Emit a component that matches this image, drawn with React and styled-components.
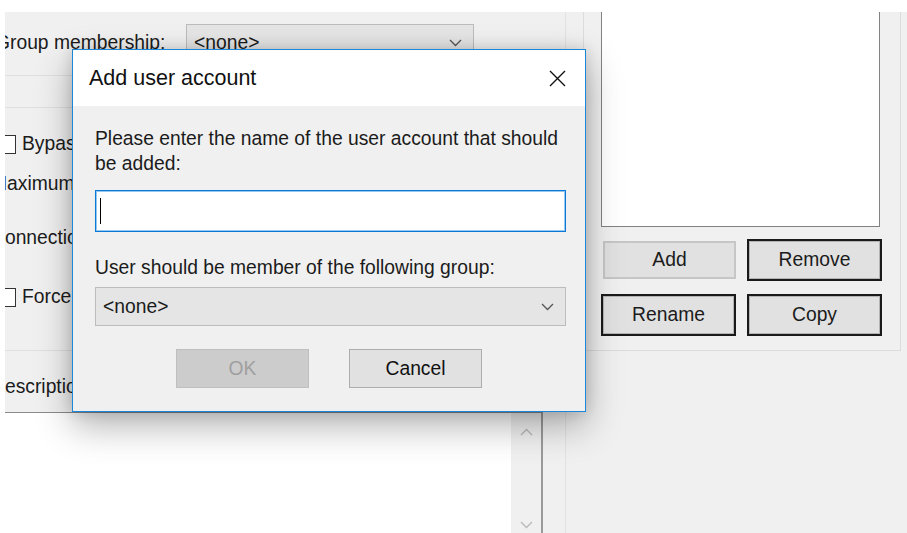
import React from "react";
import styled, { createGlobalStyle } from "styled-components";

const GlobalStyle = createGlobalStyle`
  * { box-sizing: border-box; }
  html, body { margin: 0; padding: 0; background: #ffffff; }
  body {
    font-family: "Liberation Sans", Arial, sans-serif;
    font-size: 19.3px;
    color: #1b1b1b;
  }
`;

const Screen = styled.div`
  position: relative;
  width: 907px;
  height: 533px;
  padding: 12px 0 0 5px;
  overflow: hidden;
`;

const Window = styled.div`
  display: flex;
  height: 521px;
  background: #f0f0f0;
  overflow: hidden;
`;

/* ---------- left settings pane ---------- */

const LeftPane = styled.div`
  width: 561px;
  flex-shrink: 0;
  display: flex;
  flex-direction: column;
  padding-right: 22px;
  border-right: 1px solid #e2e2e2;
`;

const GroupRow = styled.div`
  display: flex;
  align-items: center;
  height: 63px;
  padding-top: 12px;
  padding-bottom: 14px;
`;

const Label = styled.span`
  display: block;
  margin-left: ${({ $ml }) => ($ml !== undefined ? $ml : -14)}px;
  line-height: 25px;
  white-space: nowrap;
  width: ${({ $w }) => ($w ? `${$w}px` : "auto")};
  flex-shrink: 0;
`;

const Divider = styled.div`
  height: 1px;
  margin-top: ${({ $mt }) => $mt || 0}px;
  background: #dfdfdf;
  flex-shrink: 0;
`;

const BlankRow = styled.div`
  height: 31px;
`;

const Field = styled.div`
  display: flex;
  align-items: center;
  height: 30px;
  margin-top: ${({ $mt }) => $mt}px;
`;

const Check = styled.span`
  width: 19px;
  height: 19px;
  margin-left: -8px;
  margin-right: 6px;
  border: 1px solid #333;
  background: #fff;
  flex-shrink: 0;
`;

const Combo = styled.div`
  display: flex;
  align-items: center;
  justify-content: space-between;
  width: ${({ $w }) => ($w ? `${$w}px` : "100%")};
  height: ${({ $h }) => $h}px;
  padding: 0 11px 0 7px;
  background: #e5e5e5;
  border: 1px solid #bcbcbc;
  color: #1b1b1b;
`;

const TextArea = styled.div`
  flex: 1;
  display: flex;
  justify-content: flex-end;
  margin-top: 11px;
  margin-left: -10px;
  background: #ffffff;
  border-top: 1px solid #8a8a8a;
  border-right: 2px solid #9a9a9a;
`;

const ScrollTrack = styled.div`
  width: 30px;
  display: flex;
  flex-direction: column;
  align-items: center;
  justify-content: space-between;
  padding: 15px 0 4px;
  background: #f0f0f0;
`;

/* ---------- right list pane ---------- */

const RightPane = styled.div`
  flex: 1;
  padding-left: 17px;
`;

const GroupBox = styled.div`
  width: 318px;
  margin-top: -2px;
  padding: 0 17px 14px;
  border: 1px solid #dcdcdc;
  border-top: none;
`;

const ListBox = styled.div`
  width: 279px;
  height: 217px;
  background: #ffffff;
  border: 1px solid #828282;
`;

const ButtonGrid = styled.div`
  display: grid;
  grid-template-columns: 135px 135px;
  grid-auto-rows: 42px;
  column-gap: 11px;
  row-gap: 13px;
  margin-top: 12px;
`;

const PaneButton = styled.div`
  display: flex;
  align-items: center;
  justify-content: center;
  background: #e1e1e1;
  color: #1b1b1b;
  border: ${({ $active }) => ($active ? "2px solid #1a1a1a" : "2px solid #c6c6c6")};
  box-shadow: ${({ $active }) => ($active ? "inset 0 0 0 1px #b4b4b4" : "none")};
  margin: ${({ $active }) => ($active ? "0" : "2px 0 2px 2px")};
`;

/* ---------- modal dialog ---------- */

const Dialog = styled.div`
  position: absolute;
  left: 72px;
  top: 49px;
  width: 514px;
  border: 1px solid #1c86d9;
  background: #f0f0f0;
  box-shadow: 0 14px 34px rgba(0, 0, 0, 0.3), 0 0 14px rgba(0, 0, 0, 0.14);
`;

const TitleBar = styled.div`
  display: flex;
  align-items: center;
  justify-content: space-between;
  height: 56px;
  padding: 0 19px 0 16px;
  background: #ffffff;
`;

const Title = styled.span`
  font-size: 21.5px;
  color: #111;
`;

const DialogBody = styled.div`
  display: flex;
  flex-direction: column;
  padding: 20px 19px 23px 22px;
`;

const Prompt = styled.p`
  margin: 0;
  line-height: 25px;
  margin-top: ${({ $mt }) => $mt || 0}px;
`;

const NameInput = styled.div`
  display: flex;
  align-items: center;
  height: 42px;
  margin-top: 14px;
  padding-left: 4px;
  background: #ffffff;
  border: 1px solid #0a78d6;
  box-shadow: inset 0 0 0 1px rgba(20, 130, 220, 0.45);
`;

const Caret = styled.span`
  width: 1px;
  height: 26px;
  background: #000;
`;

const ComboSlot = styled.div`
  margin-top: 7px;
`;

const ButtonRow = styled.div`
  display: flex;
  justify-content: center;
  gap: 40px;
  margin: 23px -19px 0 -22px;
`;

const DialogButton = styled.div`
  width: 133px;
  height: 39px;
  display: flex;
  align-items: center;
  justify-content: center;
  background: ${({ disabled }) => (disabled ? "#cccccc" : "#e1e1e1")};
  border: 1px solid ${({ disabled }) => (disabled ? "#bfbfbf" : "#adadad")};
  color: ${({ disabled }) => (disabled ? "#a0a0a0" : "#111")};
`;

const Chevron = ({ up, color = "#555" }) => (
  <svg width="13" height="8" viewBox="0 0 13 8">
    <polyline
      points={up ? "1,7 6.5,1.5 12,7" : "1,1 6.5,6.5 12,1"}
      fill="none"
      stroke={color}
      strokeWidth="1.3"
    />
  </svg>
);

const CloseIcon = () => (
  <svg width="17" height="17" viewBox="0 0 17 17">
    <path d="M1 1 L16 16 M16 1 L1 16" stroke="#111" strokeWidth="1.4" fill="none" />
  </svg>
);

export default function App() {
  return (
    <>
      <GlobalStyle />
      <Screen>
        <Window>
          <LeftPane>
            <GroupRow>
              <Label $ml={-10} $w={191}>Group membership:</Label>
              <Combo $w={288} $h={37}>
                &lt;none&gt;
                <Chevron />
              </Combo>
            </GroupRow>
            <Divider />
            <BlankRow />
            <Divider />
            <Field $mt={21}>
              <Check />
              <span>Bypass user limit</span>
            </Field>
            <Field $mt={9}>
              <Label>Maximum connection count:</Label>
            </Field>
            <Field $mt={24}>
              <Label>Connection limit:</Label>
            </Field>
            <Field $mt={30}>
              <Check />
              <span>Force SSL for user login</span>
            </Field>
            <Divider $mt={38} />
            <Field $mt={20}>
              <Label>Description</Label>
            </Field>
            <TextArea>
              <ScrollTrack>
                <Chevron up color="#b8b8b8" />
                <Chevron color="#b8b8b8" />
              </ScrollTrack>
            </TextArea>
          </LeftPane>

          <RightPane>
            <GroupBox>
              <ListBox />
              <ButtonGrid>
                <PaneButton>Add</PaneButton>
                <PaneButton $active>Remove</PaneButton>
                <PaneButton $active>Rename</PaneButton>
                <PaneButton $active>Copy</PaneButton>
              </ButtonGrid>
            </GroupBox>
          </RightPane>
        </Window>

        <Dialog>
          <TitleBar>
            <Title>Add user account</Title>
            <CloseIcon />
          </TitleBar>
          <DialogBody>
            <Prompt>Please enter the name of the user account that should be added:</Prompt>
            <NameInput>
              <Caret />
            </NameInput>
            <Prompt $mt={23}>User should be member of the following group:</Prompt>
            <ComboSlot>
              <Combo $h={39}>
                &lt;none&gt;
                <Chevron />
              </Combo>
            </ComboSlot>
            <ButtonRow>
              <DialogButton disabled>OK</DialogButton>
              <DialogButton>Cancel</DialogButton>
            </ButtonRow>
          </DialogBody>
        </Dialog>
      </Screen>
    </>
  );
}
